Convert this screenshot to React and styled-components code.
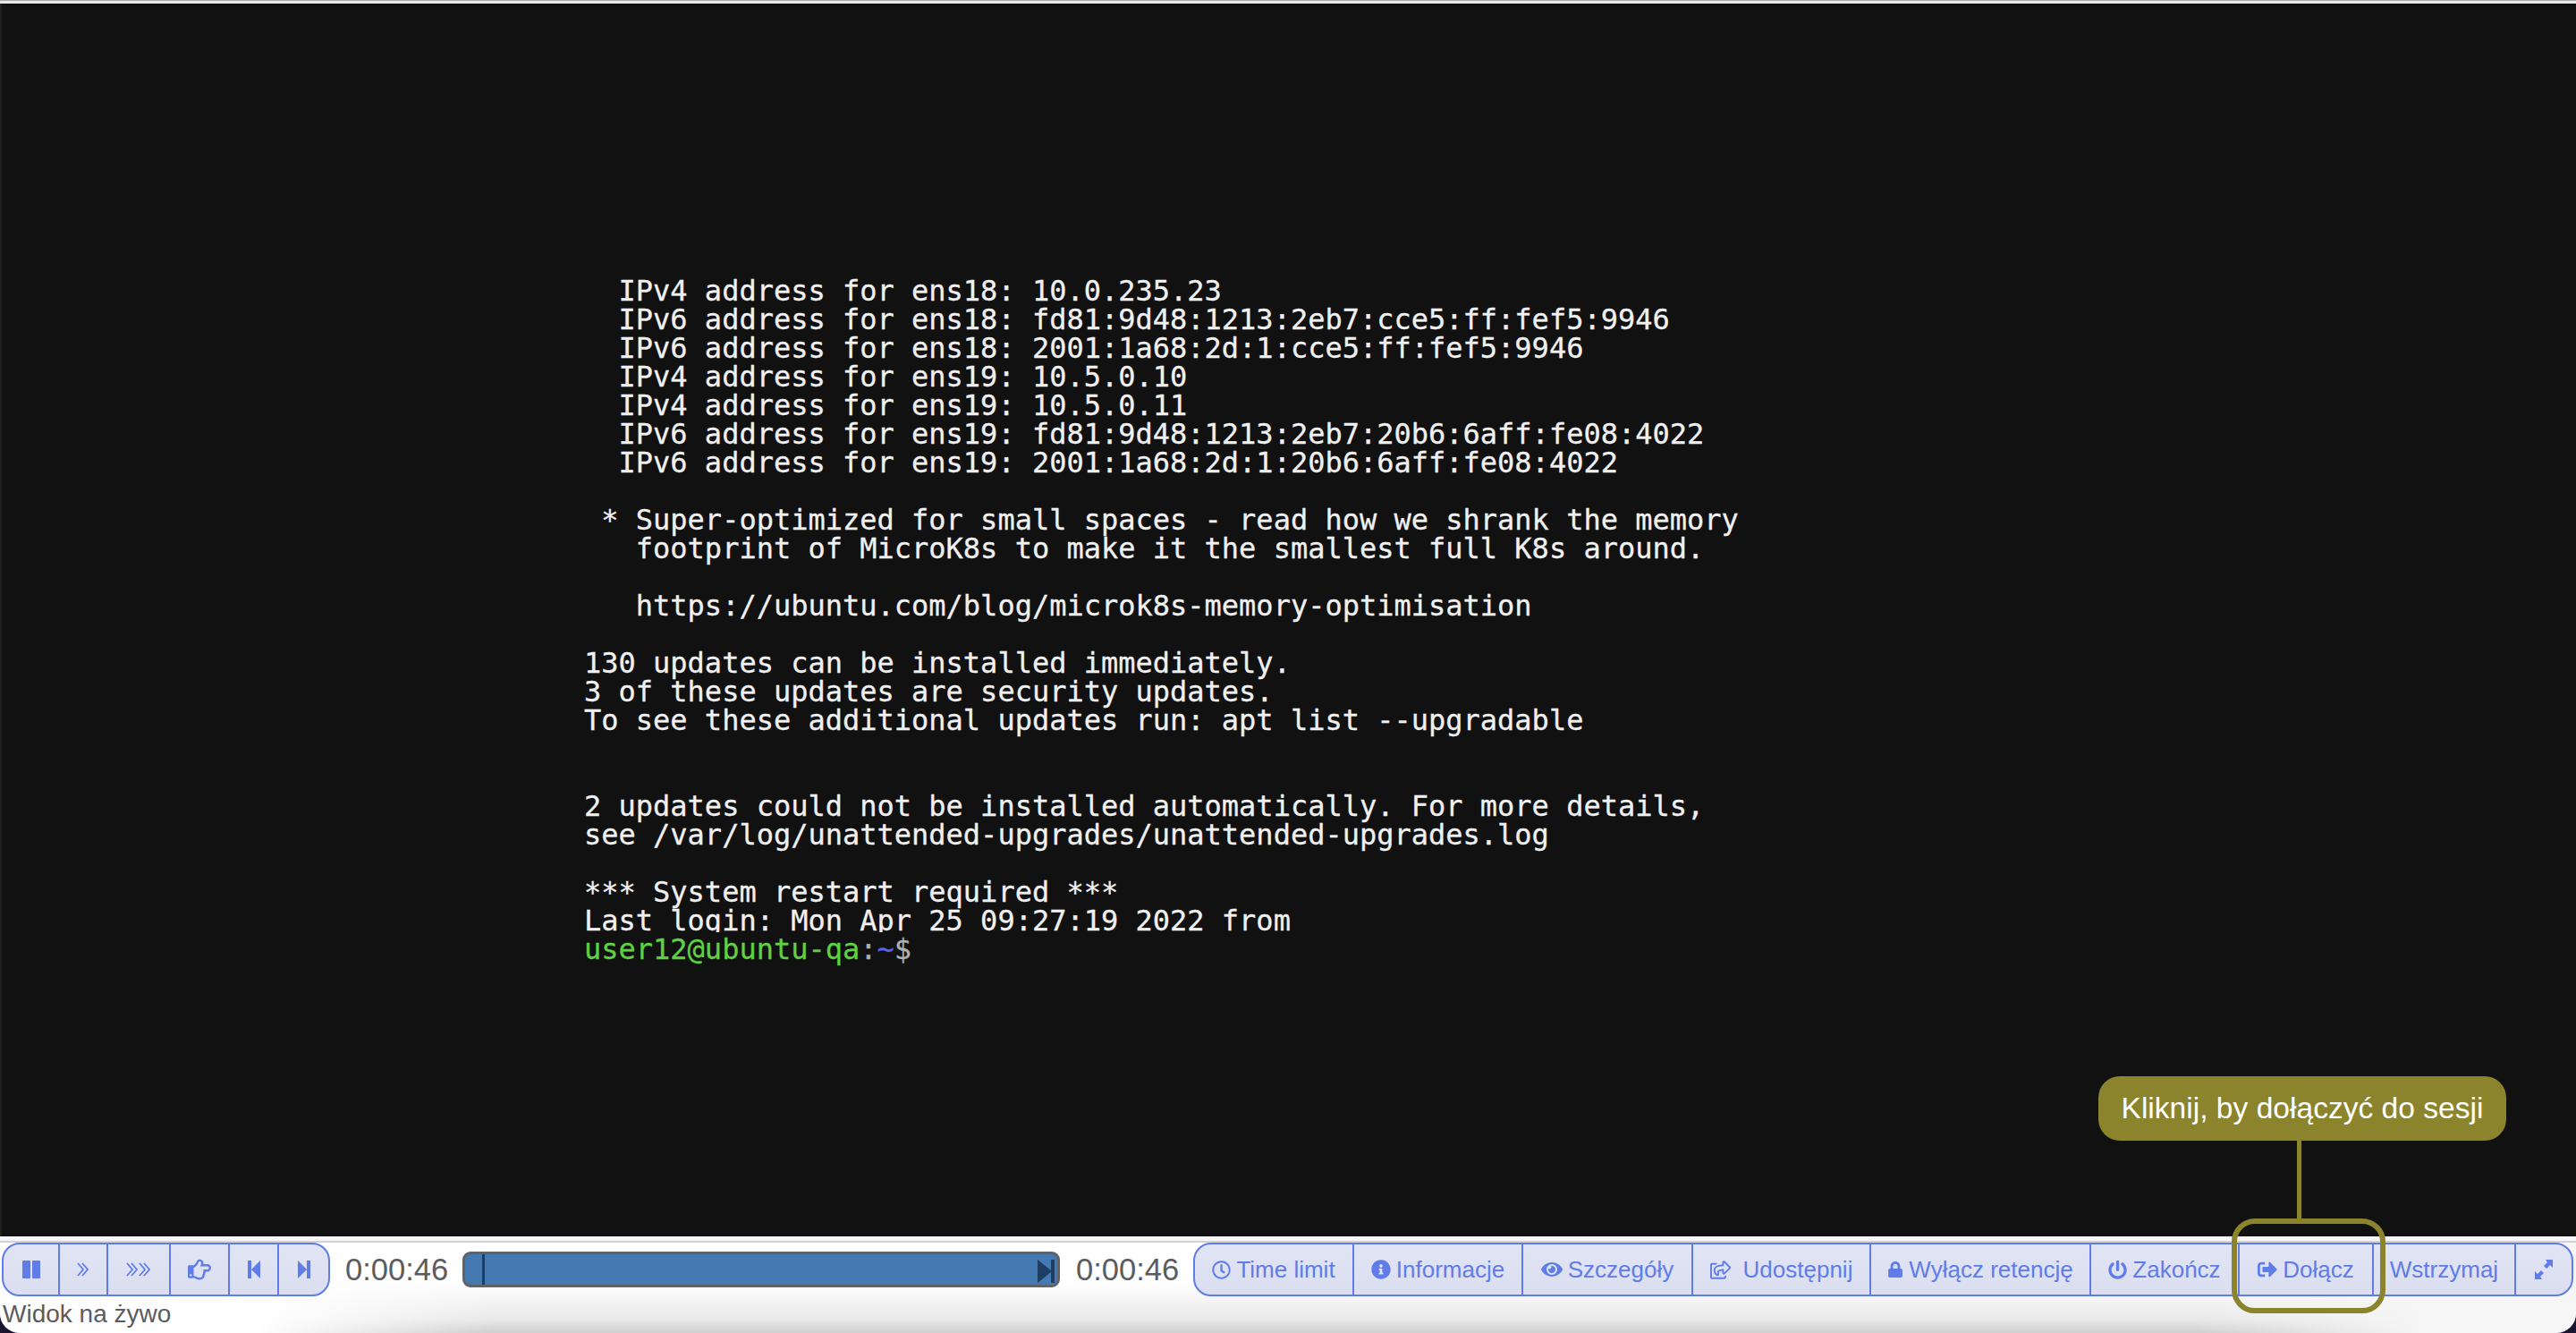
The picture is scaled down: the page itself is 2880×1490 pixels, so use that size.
import React from 'react';
import styled, { createGlobalStyle } from 'styled-components';
import { FaRegHandPointRight, FaRegClock, FaInfoCircle, FaEye, FaRegShareSquare, FaLock, FaPowerOff, FaSignOutAlt } from 'react-icons/fa';

const GlobalStyle = createGlobalStyle`
    html, body {
        margin: 0;
        padding: 0;
        background: #1a1430;
    }
    body {
        font-family: "Liberation Sans", Arial, sans-serif;
    }
`;

const Page = styled.div`
    position: relative;
    width: 2880px;
    height: 1490px;
    display: flex;
    flex-direction: column;
    overflow: hidden;
`;

const TopEdge = styled.div`
    height: 4px;
    background: linear-gradient(to bottom, #a9abaf 0, #a9abaf 1px, #e8e8ea 1px, #e8e8ea 100%);
`;

const Screen = styled.div`
    height: 1378px;
    box-sizing: border-box;
    background: #111111;
    border-left: 2px solid #1e1e1e;
    padding: 305px 0 0 651px;
`;

const Row = styled.div`
    height: ${props => props.$clipped ? 29 : 32}px;
    margin-bottom: ${props => props.$clipped ? 3 : 0}px;
    font: 32px/32px "DejaVu Sans Mono", monospace;
    -webkit-text-stroke: 0.3px currentColor;
    color: #f0f0f0;
    white-space: pre;
    overflow: ${props => props.$clipped ? 'hidden' : 'visible'};
`;

const Tint = styled.span`
    color: ${props => props.$color};
`;

const Dock = styled.div`
    position: relative;
    flex: 1;
    display: flex;
    flex-direction: column;
    background:
        linear-gradient(100deg, #ffffff 0, #ffffff 300px, rgba(255, 255, 255, 0) 560px),
        linear-gradient(280deg, #f6f6f6 0, #f6f6f6 170px, rgba(246, 246, 246, 0) 420px),
        linear-gradient(to bottom, #ffffff 0, #ffffff 45%, #e9e9e9 85%, #cfcfcf 100%);
    border-top: 5px solid #f6f6f8;
    border-radius: 0 0 22px 22px;
`;

const DockLine = styled.div`
    height: 2px;
    background: #d2d2d4;
`;

const Controls = styled.div`
    display: flex;
    align-items: center;
    padding-left: 2px;
    height: 60px;
`;

const Group = styled.div`
    display: flex;
    flex: none;
    height: 60px;
    box-sizing: border-box;
    border: 2px solid #5f7ce9;
    border-radius: 20px;
    overflow: hidden;
    background: linear-gradient(to bottom, #e1e4f5, #dadeef);
`;

const Btn = styled.div`
    width: ${props => props.$w}px;
    box-sizing: border-box;
    display: flex;
    align-items: center;
    justify-content: center;
    gap: ${props => props.$gap || 6}px;
    color: #5f7ce9;
    font-size: 26px;
    white-space: nowrap;
    border-right: 2px solid #5f7ce9;
    &:last-child {
        border-right: 0;
    }
    svg {
        flex: none;
    }
`;

const Time = styled.div`
    font-size: 34.5px;
    color: #5c5c60;
    width: ${props => props.$w}px;
    margin-left: ${props => props.$ml || 0}px;
    flex: none;
`;

const Seek = styled.div`
    position: relative;
    width: 668px;
    height: 40px;
    box-sizing: border-box;
    flex: none;
    margin-right: 18px;
    background: #4479b1;
    border: 3px solid #5f6368;
    border-radius: 9px;
`;

const Handle = styled.div`
    position: absolute;
    left: 19px;
    top: 0;
    bottom: 0;
    width: 3px;
    background: #1f3d63;
`;

const EndMark = styled.svg`
    position: absolute;
    right: 0;
    top: 6px;
    width: 22px;
    height: 26px;
`;

const Status = styled.div`
    font-size: 28px;
    line-height: 34px;
    color: #5c5c60;
    padding-left: 3px;
    margin-top: 3px;
`;

const Callout = styled.div`
    position: absolute;
    left: 2346px;
    top: 1203px;
    width: 456px;
    height: 72px;
    display: flex;
    align-items: center;
    justify-content: center;
    background: #8c842d;
    border-radius: 24px;
    color: #ffffff;
    font-size: 33.6px;
`;

const Connector = styled.div`
    position: absolute;
    left: 2568px;
    top: 1275px;
    width: 5px;
    height: 88px;
    background: #8c842d;
`;

const Ring = styled.div`
    position: absolute;
    left: 2495px;
    top: 1362px;
    width: 172px;
    height: 106px;
    box-sizing: border-box;
    border: 6px solid #8c842d;
    border-radius: 26px;
`;

const lines = [
    '  IPv4 address for ens18: 10.0.235.23',
    '  IPv6 address for ens18: fd81:9d48:1213:2eb7:cce5:ff:fef5:9946',
    '  IPv6 address for ens18: 2001:1a68:2d:1:cce5:ff:fef5:9946',
    '  IPv4 address for ens19: 10.5.0.10',
    '  IPv4 address for ens19: 10.5.0.11',
    '  IPv6 address for ens19: fd81:9d48:1213:2eb7:20b6:6aff:fe08:4022',
    '  IPv6 address for ens19: 2001:1a68:2d:1:20b6:6aff:fe08:4022',
    '',
    ' * Super-optimized for small spaces - read how we shrank the memory',
    '   footprint of MicroK8s to make it the smallest full K8s around.',
    '',
    '   https://ubuntu.com/blog/microk8s-memory-optimisation',
    '',
    '130 updates can be installed immediately.',
    '3 of these updates are security updates.',
    'To see these additional updates run: apt list --upgradable',
    '',
    '',
    '2 updates could not be installed automatically. For more details,',
    'see /var/log/unattended-upgrades/unattended-upgrades.log',
    '',
    '*** System restart required ***',
];

const Pause = () => (
    <svg width="20" height="20" viewBox="0 0 20 20" fill="currentColor">
        <rect x="0" y="0" width="9" height="20" rx="1" />
        <rect x="11" y="0" width="9" height="20" rx="1" />
    </svg>
);

const Chevrons = ({ count }) => (
    <svg width={count * 14} height="18" viewBox={`0 0 ${count * 14} 18`} fill="none" stroke="currentColor" strokeWidth="1.8">
        {Array.from({ length: count }).map((_, i) => (
            <g key={i}>
                <path d={`M${i * 14 + 1} 2 l6 7 l-6 7`} />
                <path d={`M${i * 14 + 6} 2 l6 7 l-6 7`} />
            </g>
        ))}
    </svg>
);

const StepBack = () => (
    <svg width="14" height="20" viewBox="0 0 14 20" fill="currentColor">
        <path d="M0 0h4v20H0z" />
        <path d="M14 0v20L4 10z" />
    </svg>
);

const StepForward = () => (
    <svg width="14" height="20" viewBox="0 0 14 20" fill="currentColor">
        <path d="M10 0h4v20h-4z" />
        <path d="M0 0v20l10-10z" />
    </svg>
);

const Expand = () => (
    <svg width="22" height="24" viewBox="0 0 22 24" fill="currentColor">
        <path d="M13 1h8v9l-3-3-4 4-3-3 4-4z" />
        <path d="M9 23H1v-9l3 3 4-4 3 3-4 4z" />
    </svg>
);

export default function App() {
    return (
        <Page>
            <GlobalStyle />
            <TopEdge />
            <Screen>
                {lines.map((line, i) => <Row key={i}>{line}</Row>)}
                <Row $clipped>Last login: Mon Apr 25 09:27:19 2022 from</Row>
                <Row>
                    <Tint $color="#5fd142">user12@ubuntu-qa</Tint>
                    <Tint $color="#b0b0b0">:</Tint>
                    <Tint $color="#5a64ee">~</Tint>
                    <Tint $color="#b0b0b0">$</Tint>
                </Row>
            </Screen>
            <Dock>
                <DockLine />
                <Controls>
                    <Group>
                        <Btn $w={63}><Pause /></Btn>
                        <Btn $w={54}><Chevrons count={1} /></Btn>
                        <Btn $w={70}><Chevrons count={2} /></Btn>
                        <Btn $w={66}><FaRegHandPointRight size={26} /></Btn>
                        <Btn $w={55}><StepBack /></Btn>
                        <Btn $w={55}><StepForward /></Btn>
                    </Group>
                    <Time $w={131} $ml={17}>0:00:46</Time>
                    <Seek>
                        <Handle />
                        <EndMark viewBox="0 0 22 26" fill="#1f3d63">
                            <path d="M0 0 L16 13 L0 26 Z" />
                            <rect x="15" y="0" width="4" height="26" />
                        </EndMark>
                    </Seek>
                    <Time $w={131}>0:00:46</Time>
                    <Group>
                        <Btn $w={178}><FaRegClock size={21} />Time limit</Btn>
                        <Btn $w={189}><FaInfoCircle size={22} />Informacje</Btn>
                        <Btn $w={190}><FaEye size={24} />Szczegóły</Btn>
                        <Btn $w={199} $gap={14}><FaRegShareSquare size={23} />Udostępnij</Btn>
                        <Btn $w={246}><FaLock size={18} />Wyłącz retencję</Btn>
                        <Btn $w={166}><FaPowerOff size={21} />Zakończ</Btn>
                        <Btn $w={150}><FaSignOutAlt size={22} />Dołącz</Btn>
                        <Btn $w={159}>Wstrzymaj</Btn>
                        <Btn $w={62}><Expand /></Btn>
                    </Group>
                </Controls>
                <Status>Widok na żywo</Status>
            </Dock>
            <Callout>Kliknij, by dołączyć do sesji</Callout>
            <Connector />
            <Ring />
        </Page>
    );
}
